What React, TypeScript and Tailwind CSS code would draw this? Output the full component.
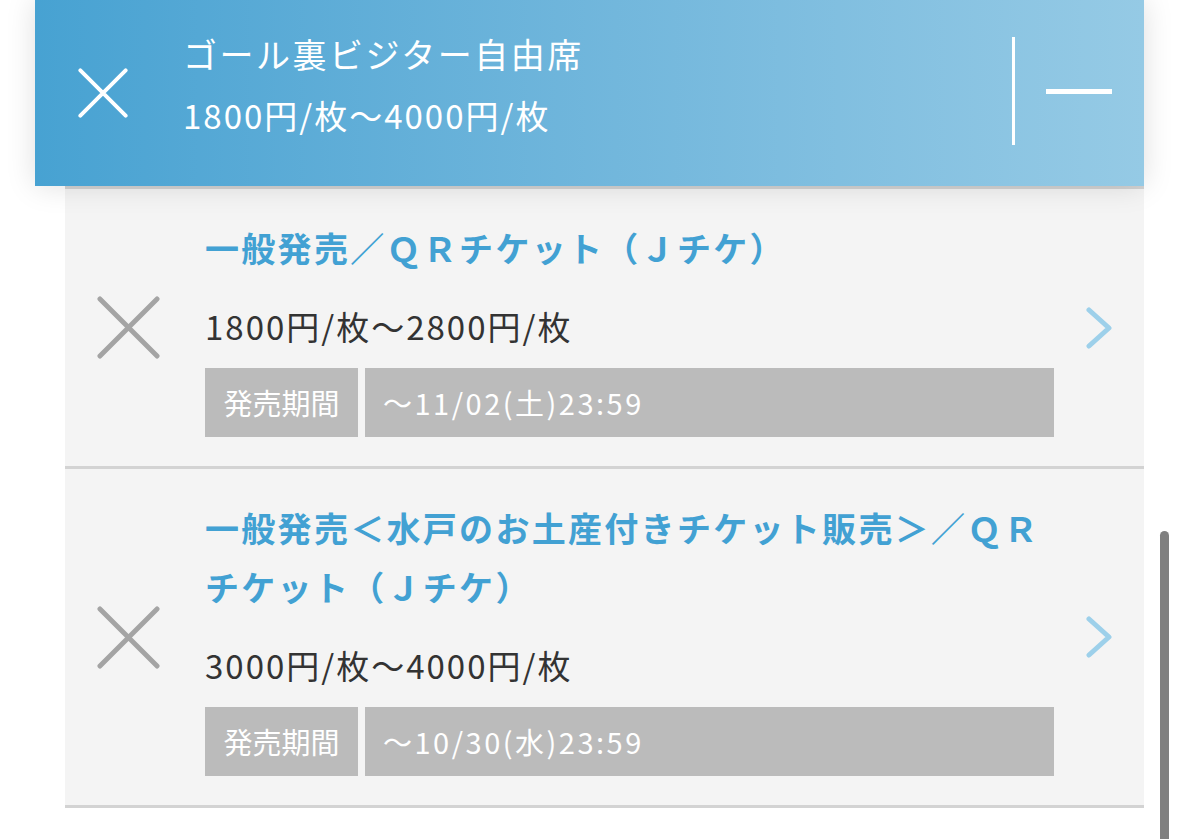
import React from 'react';

const jp = { fontFamily: '"Noto Sans CJK JP", "Noto Sans", sans-serif' };

type Ticket = {
  title: string;
  price: string;
  period: string;
};

const tickets: Ticket[] = [
  {
    title: '一般発売／ＱＲチケット（Ｊチケ）',
    price: '1800円/枚〜2800円/枚',
    period: '〜11/02(土)23:59',
  },
  {
    title: '一般発売＜水戸のお土産付きチケット販売＞／ＱＲチケット（Ｊチケ）',
    price: '3000円/枚〜4000円/枚',
    period: '〜10/30(水)23:59',
  },
];

const CrossIcon = ({ size, color, width }: { size: number; color: string; width: number }) => (
  <svg width={size} height={size} viewBox="0 0 64 64" className="shrink-0" style={{ filter: 'blur(0.6px)' }}>
    <path d="M3 3 L61 61 M61 3 L3 61" stroke={color} strokeWidth={width} strokeLinecap="round" fill="none" />
  </svg>
);

const Chevron = () => (
  <svg width="26" height="42" viewBox="0 0 26 42" className="shrink-0">
    <path d="M3 3 L23 21 L3 39" stroke="#9dd0ea" strokeWidth="5" strokeLinecap="round" strokeLinejoin="round" fill="none" />
  </svg>
);

const Header = () => (
  <div className="relative z-10 ml-[35px] flex h-[186px] w-[1109px] items-center bg-gradient-to-r from-[#47a2d2] to-[#95cae5] shadow-[0_0_28px_rgba(0,0,0,0.13)]">
    <div className="pl-[43px] pr-[55px]">
      <CrossIcon size={50} color="#ffffff" width={5} />
    </div>
    <div className="flex flex-1 flex-col self-start pt-[32px] text-white" style={jp}>
      <div className="text-[34px] leading-[44px] tracking-[2.5px]">ゴール裏ビジター自由席</div>
      <div className="mt-[17px] text-[33px] leading-[44px] tracking-[2px]">1800円/枚〜4000円/枚</div>
    </div>
    <div className="mt-[37px] h-[108px] w-[3px] self-start bg-white" />
    <div className="mb-[4px] ml-[31px] mr-[32px] h-[5px] w-[66px] bg-white" />
  </div>
);

const TicketRow = ({ t }: { t: Ticket }) => (
  <div className="flex items-center border-b-[3px] border-[#d3d3d3] bg-[#f4f4f4]">
    <div className="w-[140px] shrink-0 pl-[32px]">
      <CrossIcon size={63} color="#a4a4a4" width={5} />
    </div>
    <div className="w-[849px] shrink-0 pt-[29px] pb-[29px]" style={jp}>
      <div className="text-[34px] font-bold leading-[59px] tracking-[2.3px] text-[#42a1d3]">{t.title}</div>
      <div className="mt-[27px] text-[33px] leading-[44px] tracking-[2px] text-[#333333]">{t.price}</div>
      <div className="mt-[20px] flex h-[69px] gap-[7px] text-[29px] text-white">
        <div className="flex w-[153px] items-center justify-center bg-[#bbbbbb]">発売期間</div>
        <div className="flex flex-1 items-center bg-[#bbbbbb] px-[18px] tracking-[2.5px]">{t.period}</div>
      </div>
    </div>
    <div className="ml-[32px]">
      <Chevron />
    </div>
  </div>
);

export default function App() {
  return (
    <div className="relative h-[839px] w-[1179px] overflow-hidden bg-white">
      <Header />
      <div className="ml-[65px] w-[1079px] border-t-[3px] border-[#d3d3d3]">
        {tickets.map((t) => (
          <TicketRow key={t.title} t={t} />
        ))}
      </div>
      <div className="ml-[35px] mt-[31px] h-[1px] w-[1109px] bg-[#e6e6e6]" />
      {/* overlay scrollbar */}
      <div className="absolute left-[1160px] top-[531px] h-[320px] w-[9px] rounded-full bg-[#808080]" />
    </div>
  );
}
